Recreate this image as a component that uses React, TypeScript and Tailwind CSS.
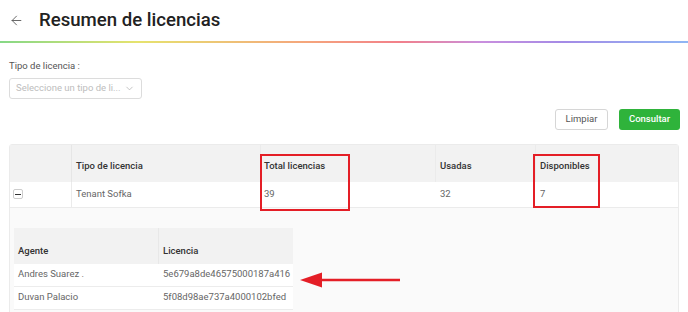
import { ArrowLeft, ChevronDown } from "lucide-react";

const font = { fontFamily: "Roboto, 'Noto Sans', sans-serif" };

export default function App() {
  return (
    <main className="relative w-[688px] h-[312px] overflow-hidden bg-white text-[9.5px]" style={font}>
      {/* Title bar */}
      <div className="flex items-center h-[41px] pl-[9px]">
        <ArrowLeft className="w-[15px] h-[15px] text-[#555]" strokeWidth={1.4} />
        <h1 className="ml-[15px] text-[18.6px] font-medium text-[#222] leading-none">Resumen de licencias</h1>
      </div>
      <div className="h-[2px] bg-[linear-gradient(90deg,#86d886,#e6e36e_20%,#f5a47c_45%,#f2808a_58%,#c98fde_70%,#a48be6_82%,#8fb6f4)]" />

      {/* Filter */}
      <div className="px-[9px] pt-[18px]">
        <label className="block text-[#555] leading-none">Tipo de licencia :</label>
        <div className="mt-[7px] flex items-center justify-between w-[133px] h-[21px] px-[6px] border border-[#dcdcdc] rounded-[3px] text-[#bdbdbd] whitespace-nowrap">
          <span>Seleccione un tipo de li...</span>
          <ChevronDown className="w-[11px] h-[11px] text-[#aaa]" strokeWidth={1.5} />
        </div>
      </div>

      {/* Actions */}
      <div className="flex justify-end gap-[11px] pr-[8px] mt-[10px]">
        <button className="h-[21px] w-[53px] border border-[#d6d6d6] rounded-[3px] text-[#555] bg-white">Limpiar</button>
        <button className="h-[21px] w-[61px] rounded-[3px] text-white font-medium bg-[#2fb33b]">Consultar</button>
      </div>

      {/* Summary table */}
      <div className="relative mx-[9px] mt-[14px] border border-[#ebebeb] rounded-t-[3px]">
        <div className="grid grid-cols-[62px_189px_175px_100px_1fr] h-[37px] bg-[#f2f2f2] text-[#333] font-medium">
          <div className="border-r border-[#e6e6e6]" />
          <div className="flex items-end pb-[8px] pl-[4px] border-r border-[#ebebeb]">Tipo de licencia</div>
          <div className="flex items-end pb-[8px] pl-[3px] border-r border-[#ebebeb]">Total licencias</div>
          <div className="flex items-end pb-[8px] pl-[4px] border-r border-[#ebebeb]">Usadas</div>
          <div className="flex items-end pb-[8px] pl-[4px]">Disponibles</div>
        </div>
        <div className="grid grid-cols-[62px_189px_175px_100px_1fr] h-[26px] items-center text-[#666] border-b border-[#ebebeb]">
          <div className="flex items-center h-full pl-[3px] border-r border-[#ebebeb]">
            <span className="flex items-center justify-center w-[10px] h-[10px] border border-[#ccc] rounded-[2px]">
              <span className="w-[6px] h-px bg-[#333]" />
            </span>
          </div>
          <div className="pl-[4px]">Tenant Sofka</div>
          <div className="pl-[3px]">39</div>
          <div className="pl-[4px]">32</div>
          <div className="pl-[4px]">7</div>
        </div>

        {/* Expanded details */}
        <div className="h-[110px] bg-[#fafafa] pl-[4px] pt-[20px]">
          <div className="w-[279px]">
            <div className="grid grid-cols-[145px_1fr] h-[36px] bg-[#f2f2f2] text-[#333] font-medium">
              <div className="flex items-end pb-[5px] pl-[4px] border-r border-[#e8e8e8]">Agente</div>
              <div className="flex items-end pb-[5px] pl-[4px]">Licencia</div>
            </div>
            <div className="grid grid-cols-[145px_1fr] h-[23px] items-center bg-white text-[#666] border-b border-[#ececec]">
              <div className="pl-[4px]">Andres Suarez .</div>
              <div className="pl-[4px]">5e679a8de46575000187a416</div>
            </div>
            <div className="grid grid-cols-[145px_1fr] h-[23px] items-center bg-white text-[#666] border-b border-[#ececec]">
              <div className="pl-[4px]">Duvan Palacio</div>
              <div className="pl-[4px]">5f08d98ae737a4000102bfed</div>
            </div>
          </div>
        </div>

        {/* Annotation boxes */}
        <div className="absolute left-[250px] top-[9px] w-[90px] h-[57px] border-2 border-[#e41e26]" />
        <div className="absolute left-[523px] top-[9px] w-[67px] h-[54px] border-2 border-[#e41e26]" />
      </div>

      {/* Annotation arrow */}
      <svg className="absolute left-[298px] top-[271px]" width="104" height="18" viewBox="0 0 104 18">
        <line x1="20" y1="9" x2="102" y2="9" stroke="#e41e26" strokeWidth="2.5" />
        <polygon points="2,9 24,1.5 24,16.5" fill="#e41e26" />
      </svg>
    </main>
  );
}
